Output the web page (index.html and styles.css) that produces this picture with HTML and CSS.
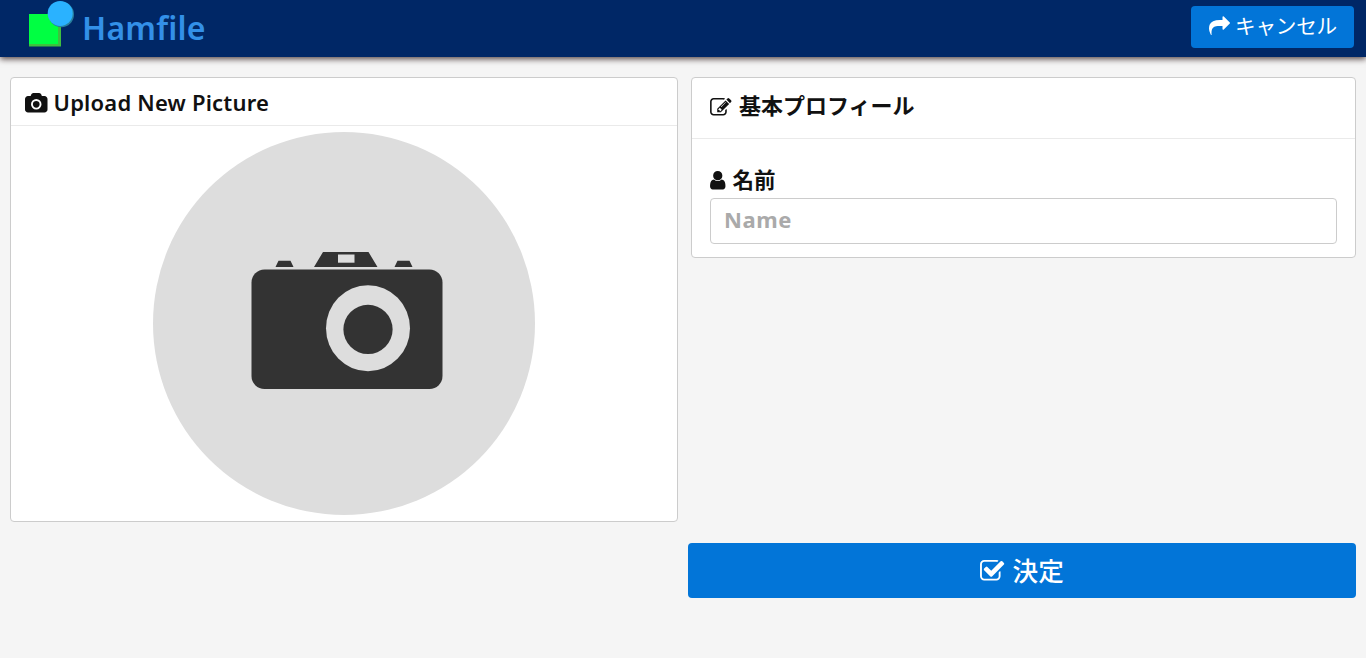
FILE: index.html
```html
<!DOCTYPE html>
<html lang="ja">
<head>
<meta charset="utf-8">
<title>Hamfile</title>
<link rel="stylesheet" href="styles.css">
</head>
<body>
<header class="topbar">
  <a class="brand">
    <svg class="logo" viewBox="0 0 48 48"><path fill="#3fc03f" d="M1 14h32v32.500H1z"/><path fill="#00ff42" d="M1 14h29v30H1z"/><circle cx="33.300" cy="14.500" r="12.700" fill="#28809f"/><circle cx="32.200" cy="13.400" r="12.500" fill="#2ab2ff"/></svg>
    <span class="brand-name">Hamfile</span>
  </a>
  <button class="btn cancel">
    <svg class="icon-share" viewBox="0 128 1792 1536" fill="currentColor"><path d="M1792 640q0 26-19 45l-512 512q-19 19-45 19t-45-19-19-45v-256h-224q-98 0-175.500 6t-154 21.500-133 42.500-105.500 69.500-80 101-48.500 138.500-17.500 181q0 55 5 123 0 6 2.500 23.500t2.500 26.500q0 15-8.500 25t-23.500 10q-16 0-28-17-7-9-13-22t-13.500-30-10.500-24q-127-285-127-451 0-199 53-333 162-403 875-403h224v-256q0-26 19-45t45-19 45 19l512 512q19 19 19 45z"/></svg>
    <span class="cancel-text">キャンセル</span>
  </button>
</header>
<main class="content">
  <section class="card picture">
    <h2 class="card-head">
      <svg class="icon-camera" viewBox="0 0 1920 1664" fill="currentColor"><path d="M960 672q119 0 203.500 84.500t84.500 203.500-84.500 203.500-203.500 84.500-203.500-84.500-84.500-203.500 84.500-203.500 203.500-84.500zm704-416q106 0 181 75t75 181v896q0 106-75 181t-181 75h-1408q-106 0-181-75t-75-181v-896q0-106 75-181t181-75h224l51-136q19-49 69.500-84.500t103.500-35.500h512q53 0 103.500 35.500t69.500 84.500l51 136h224zm-704 1152q185 0 316.500-131.500t131.500-316.500-131.500-316.500-316.500-131.500-316.500 131.500-131.500 316.500 131.500 316.500 316.500 131.500z"/></svg>
      <span class="upload-text">Upload New Picture</span>
    </h2>
    <svg class="avatar" viewBox="153 132 382 383">
      <ellipse cx="344" cy="323.500" rx="191" ry="191.500" fill="#ddd"/>
      <g fill="#333">
        <rect x="251.500" y="269.500" width="191" height="119.500" rx="13"/>
        <path d="M275.500 267l3-6.300h12l3 6.300zM394.500 267l3-6.300h12l3 6.300zM314 267l9-15h45.500l9 15z"/>
      </g>
      <path fill="#ddd" d="M338 254.500h16.500v8.200H338z"/>
      <ellipse cx="368" cy="328.200" rx="42" ry="43" fill="#ddd"/>
      <circle cx="368" cy="329.400" r="24.600" fill="#333"/>
    </svg>
  </section>
  <div class="side">
    <section class="card profile">
      <h2 class="profile-head">
        <svg class="icon-edit" viewBox="64 128 1720 1408" fill="currentColor"><path d="M888 1184l116-116-152-152-116 116v56h96v96h56zm440-720q-16-16-33 1l-350 350q-17 17-1 33t33-1l350-350q17-17 1-33zm80 594v190q0 119-84.500 203.500t-203.500 84.500h-768q-119 0-203.500-84.500t-84.500-203.500v-832q0-119 84.500-203.500t203.500-84.500h768q63 0 117 25 15 7 18 23 3 17-9 29l-49 49q-14 14-32 8-23-6-45-6h-768q-66 0-113 47t-47 113v832q0 66 47 113t113 47h768q66 0 113-47t47-113v-126q0-13 9-22l64-64q15-15 35-7t20 29zm-96-738l288 288-672 672h-288v-288zm444 132l-92 92-288-288 92-92q28-28 68-28t68 28l152 152q28 28 28 68t-28 68z"/></svg>
        <span class="profile-text">基本プロフィール</span>
      </h2>
      <div class="field">
        <label class="field-label" for="name">
          <svg class="icon-user" viewBox="256 128 1280 1536" fill="currentColor"><path d="M1536 1399q0 109-62.500 187t-150.500 78h-854q-88 0-150.500-78t-62.500-187q0-85 8.500-160.500t31.500-152 58.500-131 94-89 134.500-34.500q131 128 313 128t313-128q76 0 134.500 34.500t94 89 58.500 131 31.500 152 8.500 160.500zm-256-887q0 159-112.500 271.500t-271.500 112.500-271.500-112.500-112.500-271.500 112.500-271.500 271.500-112.500 271.500 112.500 112.500 271.500z"/></svg>
          <span class="label-text">名前</span>
        </label>
        <input class="name-input" id="name" type="text" placeholder="Name">
      </div>
    </section>
    <button class="btn submit">
      <svg class="icon-check" viewBox="64 128 1663 1408" fill="currentColor"><path d="M1472 930v318q0 119-84.500 203.500t-203.500 84.500h-832q-119 0-203.500-84.500t-84.500-203.500v-832q0-119 84.500-203.500t203.500-84.500h832q63 0 117 25 15 7 18 23 3 17-9 29l-49 49q-10 10-23 10-3 0-9-2-23-6-45-6h-832q-66 0-113 47t-47 113v832q0 66 47 113t113 47h832q66 0 113-47t47-113v-254q0-13 9-22l64-64q10-10 23-10 6 0 12 3 20 8 20 29zm231-489l-814 814q-24 24-57 24t-57-24l-430-430q-24-24-24-57t24-57l110-110q24-24 57-24t57 24l263 263 647-647q24-24 57-24t57 24l110 110q24 24 24 57t-24 57z"/></svg>
      <span>決定</span>
    </button>
  </div>
</main>
</body>
</html>
```
FILE: styles.css
```css
* { box-sizing: border-box; }
body { margin: 0; height: 658px; background: #f5f5f5; color: #111; font-family: "Noto Sans", "Noto Sans CJK JP", sans-serif; overflow: hidden; }
svg { display: block; flex: none; overflow: visible; }
.topbar { height: 57px; padding: 0 12px 0 28px; display: flex; justify-content: space-between; background: #002766; box-shadow: 0 2px 6px rgba(30, 10, 10, .75); }
.brand { display: flex; gap: 4px; color: #3390e8; }
.logo { width: 48px; height: 48px; }
.brand-name { font-size: 32px; font-weight: 600; line-height: 56px; padding-left: 2px; letter-spacing: .2px; }
.btn { display: flex; border: 0; border-radius: 4px; background: #0275d8; color: #fff; font-family: "Noto Sans CJK JP", sans-serif; white-space: nowrap; }
.cancel { width: 163px; height: 42px; margin-top: 6px; padding: 0 0 0 18px; gap: 5px; font-size: 20.600px; line-height: 39px; }
.cancel-text { letter-spacing: -.2px; }
.icon-share { width: 21px; height: 18px; margin-top: 11px; }
.content { display: flex; justify-content: space-between; padding: 20px 10px 0; }
.card { background: #fff; border: 1px solid #ccc; border-radius: 4px; }
.picture { width: 668px; height: 445px; }
.card-head { margin: 0; height: 48px; padding-left: 14px; display: flex; gap: 6px; border-bottom: 1px solid #eaeaea; font-size: 22px; font-weight: 600; line-height: 48px; letter-spacing: .2px; }
.icon-camera { width: 22.500px; height: 19.500px; margin-top: 15px; }
.avatar { width: 382px; height: 383px; margin: 6px 0 0 142px; }
.side { width: 668px; display: flex; flex-direction: column; }
.profile { width: 665px; height: 181px; margin-left: 3px; }
.profile-head { margin: 0; height: 61px; padding-left: 17.500px; display: flex; gap: 8px; border-bottom: 1px solid #eaeaea; font-family: "Noto Sans CJK JP", sans-serif; font-size: 22px; font-weight: 700; line-height: 52px; }
.icon-edit { width: 21.500px; height: 17.500px; margin-top: 20px; }
.field { padding: 25px 18px 0; }
.field-label { height: 34px; margin-left: -.5px; display: flex; gap: 7.500px; font-family: "Noto Sans CJK JP", sans-serif; font-size: 21.500px; font-weight: 700; line-height: 30px; }
.icon-user { width: 15.500px; height: 18.500px; margin-top: 7px; }
.name-input { display: block; width: 627px; height: 46px; padding: 0 13px 4px; border: 1px solid #ccc; border-radius: 4px; background: #fff; color: #111; font: 700 22px "Noto Sans", "Noto Sans CJK JP", sans-serif; letter-spacing: .6px; }
.name-input::placeholder { color: #aaa; opacity: 1; }
.submit { width: 668px; height: 55px; margin-top: 285px; padding: 0; justify-content: center; gap: 8px; font-size: 25.600px; font-weight: 500; line-height: 54px; }
.icon-check { width: 24.300px; height: 20.500px; margin-top: 17px; }
```
